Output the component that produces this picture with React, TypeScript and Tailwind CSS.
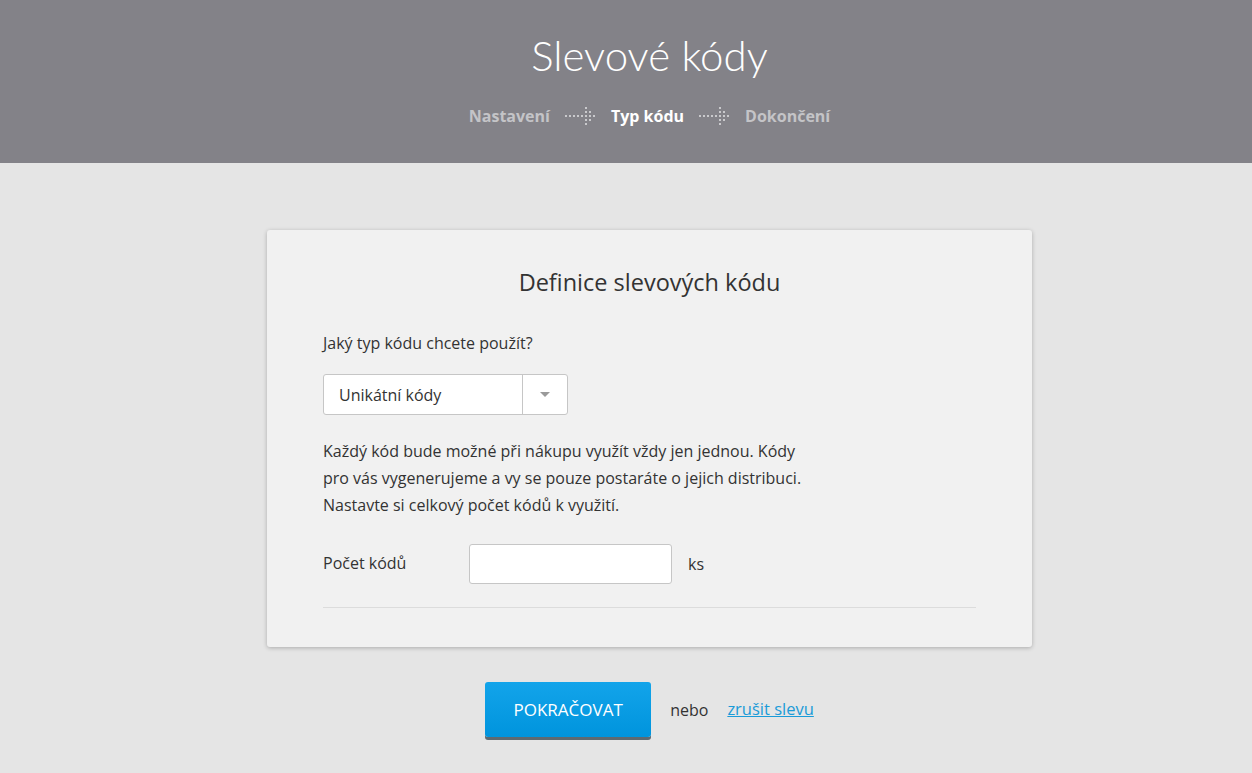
function DotArrow() {
  const dots: [number, number][] = [
    [0, 9], [4, 9], [8, 9], [12, 9], [16, 9], [20, 9], [24, 9], [28, 9],
    [20, 1], [20, 5], [20, 13], [20, 17],
    [24, 5], [24, 13],
  ]
  return (
    <svg width="31" height="20" viewBox="0 0 31 20" className="mx-[15px]">
      {dots.map(([x, y], i) => (
        <rect key={i} x={x} y={y} width="2" height="2" fill="#c9c9cc" />
      ))}
    </svg>
  )
}

export default function App() {
  return (
    <div className="min-h-screen bg-[#e5e5e5] font-['Open_Sans',sans-serif] text-[#333]">
      {/* header */}
      <div className="h-[163px] bg-[#838288] flex flex-col items-center pt-[28px] pl-[47px]">
        <h1 className="text-[42px] font-light text-white leading-[54px] font-['Lato',sans-serif]">Slevové kódy</h1>
        <div className="flex items-center mt-[22px] text-[16px] font-bold">
          <span className="text-[#c4c4c7]">Nastavení</span>
          <DotArrow />
          <span className="text-white">Typ kódu</span>
          <DotArrow />
          <span className="text-[#c4c4c7]">Dokončení</span>
        </div>
      </div>

      <div className="pl-[47px]">
        {/* card */}
        <div className="w-[765px] mx-auto mt-[67px] bg-[#f1f1f1] rounded-[3px] shadow-[0_1px_4px_rgba(0,0,0,0.25)] px-[56px] pt-[36px] pb-[39px]">
          <h2 className="text-center text-[23.5px] leading-[32px] text-[#333]">Definice slevových kódu</h2>
          <p className="mt-[33px] text-[16px] leading-[24px]">Jaký typ kódu chcete použít?</p>
          <div className="mt-[19px] w-[245px] h-[41px] bg-white border border-[#c6c6c6] rounded-[3px] flex">
            <div className="flex-1 flex items-center pl-[15px] text-[16px] text-[#333]">Unikátní kódy</div>
            <div className="w-[45px] border-l border-[#c6c6c6] flex items-center justify-center">
              <svg width="10" height="6" viewBox="0 0 10 6">
                <path d="M0 0 L10 0 L5 5 Z" fill="#9a9a9a" />
              </svg>
            </div>
          </div>
          <p className="mt-[23px] w-[490px] text-[16px] leading-[27px]">
            Každý kód bude možné při nákupu využít vždy jen jednou. Kódy pro vás vygenerujeme a vy se pouze postaráte o jejich distribuci. Nastavte si celkový počet kódů k využití.
          </p>
          <div className="mt-[25px] flex items-center">
            <label className="w-[146px] text-[16px] -mt-[2px]">Počet kódů</label>
            <input className="w-[203px] h-[40px] bg-white border border-[#c6c6c6] rounded-[3px] px-3 outline-none" />
            <span className="ml-[16px] text-[16px]">ks</span>
          </div>
          <div className="mt-[23px] border-t border-[#dcdcdc]" />
        </div>

        {/* actions */}
        <div className="flex items-center justify-center mt-[35px]">
          <button className="w-[166px] h-[55px] rounded-[3px] bg-gradient-to-b from-[#12a4ea] to-[#0094dd] text-white text-[17px] shadow-[0_3px_0_#5d6a72]">
            POKRAČOVAT
          </button>
          <span className="ml-[19px] text-[16px] text-[#333]">nebo</span>
          <a href="#" className="ml-[19px] text-[16.5px] text-[#1a9bd8] underline">zrušit slevu</a>
        </div>
      </div>
    </div>
  )
}
